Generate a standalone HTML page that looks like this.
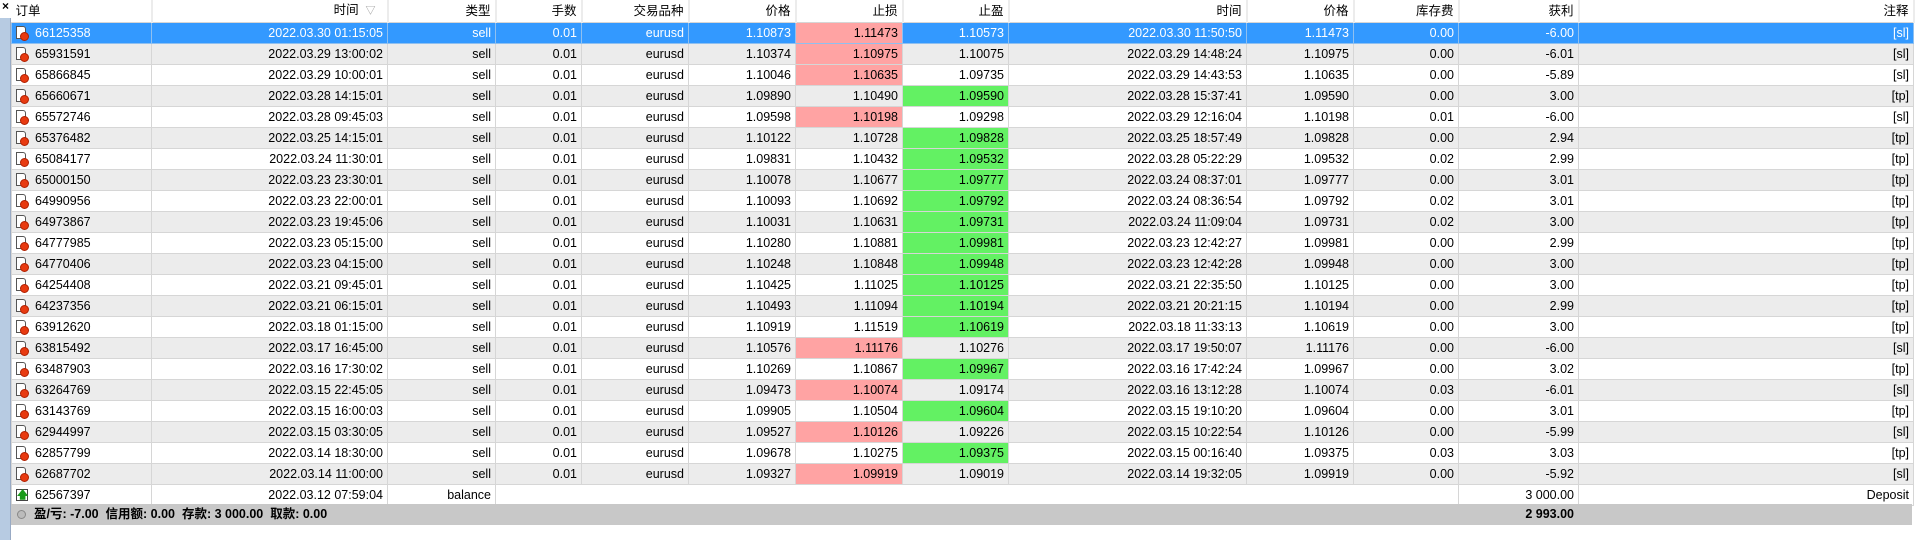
<!DOCTYPE html>
<html><head><meta charset="utf-8"><style>
*{margin:0;padding:0;box-sizing:border-box}
body{width:1916px;height:540px;background:#fff;position:relative;overflow:hidden;font-family:"Liberation Sans","Noto Sans CJK SC",sans-serif;font-size:12.5px;color:#000}
#strip{position:absolute;left:0;top:0;width:11px;height:540px;background:#b7cbe2;border-right:1px solid #98aac4}
#x{position:absolute;left:0;top:0;width:11px;height:18px;background:#fff;font-size:12px;font-weight:bold;line-height:12px;text-align:center}
table{position:absolute;left:11px;top:0;border-collapse:collapse;table-layout:fixed;width:1902px}
td,th{height:21px;padding:0 4px 0 0;text-align:right;white-space:nowrap;overflow:hidden;border:1px solid #d6d6d6;border-top:none;font-weight:normal;line-height:20px}
th{background:#fff;border-bottom:1px solid #d6d6d6;border-right:2px solid #ececec;border-left:none}
th.l,td.l{text-align:left;padding-left:23px;position:relative}
tr:nth-child(odd) td{background:#ececec}
tr.sel td{background:#3399ff;color:#fff;border-color:#8fc0f0}
td.r{background:#ffa3a3!important;color:#000!important}
td.g{background:#63f163!important;color:#000!important}
.ic{position:absolute;left:4px;top:3px;width:10px;height:13px;border:1px solid #555;background:#fff;border-radius:0 3px 0 0}
.ic:after{content:"";position:absolute;right:-4px;bottom:-3px;width:7px;height:7px;border-radius:50%;background:#e83a10;border:1px solid #b02000}
.ib{position:absolute;left:4px;top:4px;width:12px;height:12px;border:1px solid #444;background:#fff;color:#1a9a1a;font-size:11px;line-height:10px;text-align:center;font-weight:bold;font-style:normal}
tr.bal td.e{border-left:none;border-right:none}
#foot{position:absolute;left:11px;top:504px;width:1901px;height:21px;background:#c8c8c8;font-weight:bold;line-height:21px}
#foot .d{position:absolute;left:6px;top:6px;width:9px;height:9px;border-radius:50%;background:#bbb;border:1px solid #888}
</style></head><body>
<div id="strip"></div><div id="x">×</div>
<table>
<colgroup><col style="width:140px"><col style="width:236px"><col style="width:108px"><col style="width:86px"><col style="width:107px"><col style="width:107px"><col style="width:107px"><col style="width:106px"><col style="width:238px"><col style="width:107px"><col style="width:105px"><col style="width:120px"><col style="width:335px"></colgroup>
<tr><th style="text-align:left;padding-left:4px">订单</th><th>时间 &nbsp;<span style="color:#999;font-size:10px">▽</span>&nbsp;&nbsp;</th><th>类型</th><th>手数</th><th>交易品种</th><th>价格</th><th>止损</th><th>止盈</th><th>时间</th><th>价格</th><th>库存费</th><th>获利</th><th>注释</th></tr>
<tr class="sel"><td class="l"><i class="ic"></i>66125358</td><td>2022.03.30 01:15:05</td><td>sell</td><td>0.01</td><td>eurusd</td><td>1.10873</td><td class="r">1.11473</td><td>1.10573</td><td>2022.03.30 11:50:50</td><td>1.11473</td><td>0.00</td><td>-6.00</td><td>[sl]</td></tr>
<tr><td class="l"><i class="ic"></i>65931591</td><td>2022.03.29 13:00:02</td><td>sell</td><td>0.01</td><td>eurusd</td><td>1.10374</td><td class="r">1.10975</td><td>1.10075</td><td>2022.03.29 14:48:24</td><td>1.10975</td><td>0.00</td><td>-6.01</td><td>[sl]</td></tr>
<tr><td class="l"><i class="ic"></i>65866845</td><td>2022.03.29 10:00:01</td><td>sell</td><td>0.01</td><td>eurusd</td><td>1.10046</td><td class="r">1.10635</td><td>1.09735</td><td>2022.03.29 14:43:53</td><td>1.10635</td><td>0.00</td><td>-5.89</td><td>[sl]</td></tr>
<tr><td class="l"><i class="ic"></i>65660671</td><td>2022.03.28 14:15:01</td><td>sell</td><td>0.01</td><td>eurusd</td><td>1.09890</td><td>1.10490</td><td class="g">1.09590</td><td>2022.03.28 15:37:41</td><td>1.09590</td><td>0.00</td><td>3.00</td><td>[tp]</td></tr>
<tr><td class="l"><i class="ic"></i>65572746</td><td>2022.03.28 09:45:03</td><td>sell</td><td>0.01</td><td>eurusd</td><td>1.09598</td><td class="r">1.10198</td><td>1.09298</td><td>2022.03.29 12:16:04</td><td>1.10198</td><td>0.01</td><td>-6.00</td><td>[sl]</td></tr>
<tr><td class="l"><i class="ic"></i>65376482</td><td>2022.03.25 14:15:01</td><td>sell</td><td>0.01</td><td>eurusd</td><td>1.10122</td><td>1.10728</td><td class="g">1.09828</td><td>2022.03.25 18:57:49</td><td>1.09828</td><td>0.00</td><td>2.94</td><td>[tp]</td></tr>
<tr><td class="l"><i class="ic"></i>65084177</td><td>2022.03.24 11:30:01</td><td>sell</td><td>0.01</td><td>eurusd</td><td>1.09831</td><td>1.10432</td><td class="g">1.09532</td><td>2022.03.28 05:22:29</td><td>1.09532</td><td>0.02</td><td>2.99</td><td>[tp]</td></tr>
<tr><td class="l"><i class="ic"></i>65000150</td><td>2022.03.23 23:30:01</td><td>sell</td><td>0.01</td><td>eurusd</td><td>1.10078</td><td>1.10677</td><td class="g">1.09777</td><td>2022.03.24 08:37:01</td><td>1.09777</td><td>0.00</td><td>3.01</td><td>[tp]</td></tr>
<tr><td class="l"><i class="ic"></i>64990956</td><td>2022.03.23 22:00:01</td><td>sell</td><td>0.01</td><td>eurusd</td><td>1.10093</td><td>1.10692</td><td class="g">1.09792</td><td>2022.03.24 08:36:54</td><td>1.09792</td><td>0.02</td><td>3.01</td><td>[tp]</td></tr>
<tr><td class="l"><i class="ic"></i>64973867</td><td>2022.03.23 19:45:06</td><td>sell</td><td>0.01</td><td>eurusd</td><td>1.10031</td><td>1.10631</td><td class="g">1.09731</td><td>2022.03.24 11:09:04</td><td>1.09731</td><td>0.02</td><td>3.00</td><td>[tp]</td></tr>
<tr><td class="l"><i class="ic"></i>64777985</td><td>2022.03.23 05:15:00</td><td>sell</td><td>0.01</td><td>eurusd</td><td>1.10280</td><td>1.10881</td><td class="g">1.09981</td><td>2022.03.23 12:42:27</td><td>1.09981</td><td>0.00</td><td>2.99</td><td>[tp]</td></tr>
<tr><td class="l"><i class="ic"></i>64770406</td><td>2022.03.23 04:15:00</td><td>sell</td><td>0.01</td><td>eurusd</td><td>1.10248</td><td>1.10848</td><td class="g">1.09948</td><td>2022.03.23 12:42:28</td><td>1.09948</td><td>0.00</td><td>3.00</td><td>[tp]</td></tr>
<tr><td class="l"><i class="ic"></i>64254408</td><td>2022.03.21 09:45:01</td><td>sell</td><td>0.01</td><td>eurusd</td><td>1.10425</td><td>1.11025</td><td class="g">1.10125</td><td>2022.03.21 22:35:50</td><td>1.10125</td><td>0.00</td><td>3.00</td><td>[tp]</td></tr>
<tr><td class="l"><i class="ic"></i>64237356</td><td>2022.03.21 06:15:01</td><td>sell</td><td>0.01</td><td>eurusd</td><td>1.10493</td><td>1.11094</td><td class="g">1.10194</td><td>2022.03.21 20:21:15</td><td>1.10194</td><td>0.00</td><td>2.99</td><td>[tp]</td></tr>
<tr><td class="l"><i class="ic"></i>63912620</td><td>2022.03.18 01:15:00</td><td>sell</td><td>0.01</td><td>eurusd</td><td>1.10919</td><td>1.11519</td><td class="g">1.10619</td><td>2022.03.18 11:33:13</td><td>1.10619</td><td>0.00</td><td>3.00</td><td>[tp]</td></tr>
<tr><td class="l"><i class="ic"></i>63815492</td><td>2022.03.17 16:45:00</td><td>sell</td><td>0.01</td><td>eurusd</td><td>1.10576</td><td class="r">1.11176</td><td>1.10276</td><td>2022.03.17 19:50:07</td><td>1.11176</td><td>0.00</td><td>-6.00</td><td>[sl]</td></tr>
<tr><td class="l"><i class="ic"></i>63487903</td><td>2022.03.16 17:30:02</td><td>sell</td><td>0.01</td><td>eurusd</td><td>1.10269</td><td>1.10867</td><td class="g">1.09967</td><td>2022.03.16 17:42:24</td><td>1.09967</td><td>0.00</td><td>3.02</td><td>[tp]</td></tr>
<tr><td class="l"><i class="ic"></i>63264769</td><td>2022.03.15 22:45:05</td><td>sell</td><td>0.01</td><td>eurusd</td><td>1.09473</td><td class="r">1.10074</td><td>1.09174</td><td>2022.03.16 13:12:28</td><td>1.10074</td><td>0.03</td><td>-6.01</td><td>[sl]</td></tr>
<tr><td class="l"><i class="ic"></i>63143769</td><td>2022.03.15 16:00:03</td><td>sell</td><td>0.01</td><td>eurusd</td><td>1.09905</td><td>1.10504</td><td class="g">1.09604</td><td>2022.03.15 19:10:20</td><td>1.09604</td><td>0.00</td><td>3.01</td><td>[tp]</td></tr>
<tr><td class="l"><i class="ic"></i>62944997</td><td>2022.03.15 03:30:05</td><td>sell</td><td>0.01</td><td>eurusd</td><td>1.09527</td><td class="r">1.10126</td><td>1.09226</td><td>2022.03.15 10:22:54</td><td>1.10126</td><td>0.00</td><td>-5.99</td><td>[sl]</td></tr>
<tr><td class="l"><i class="ic"></i>62857799</td><td>2022.03.14 18:30:00</td><td>sell</td><td>0.01</td><td>eurusd</td><td>1.09678</td><td>1.10275</td><td class="g">1.09375</td><td>2022.03.15 00:16:40</td><td>1.09375</td><td>0.03</td><td>3.03</td><td>[tp]</td></tr>
<tr><td class="l"><i class="ic"></i>62687702</td><td>2022.03.14 11:00:00</td><td>sell</td><td>0.01</td><td>eurusd</td><td>1.09327</td><td class="r">1.09919</td><td>1.09019</td><td>2022.03.14 19:32:05</td><td>1.09919</td><td>0.00</td><td>-5.92</td><td>[sl]</td></tr>
<tr class="bal"><td class="l"><i class="ib">&#129093;</i>62567397</td><td>2022.03.12 07:59:04</td><td>balance</td><td class="e"></td><td class="e"></td><td class="e"></td><td class="e"></td><td class="e"></td><td class="e"></td><td class="e"></td><td class="e" style="border-right:1px solid #d6d6d6"></td><td>3 000.00</td><td>Deposit</td></tr>
</table>
<div id="foot"><i class="d"></i><span style="position:absolute;left:23px">盈/亏: -7.00 &nbsp;信用额: 0.00 &nbsp;存款: 3 000.00 &nbsp;取款: 0.00</span><span style="position:absolute;left:1447px;width:116px;text-align:right">2 993.00</span></div>
</body></html>
